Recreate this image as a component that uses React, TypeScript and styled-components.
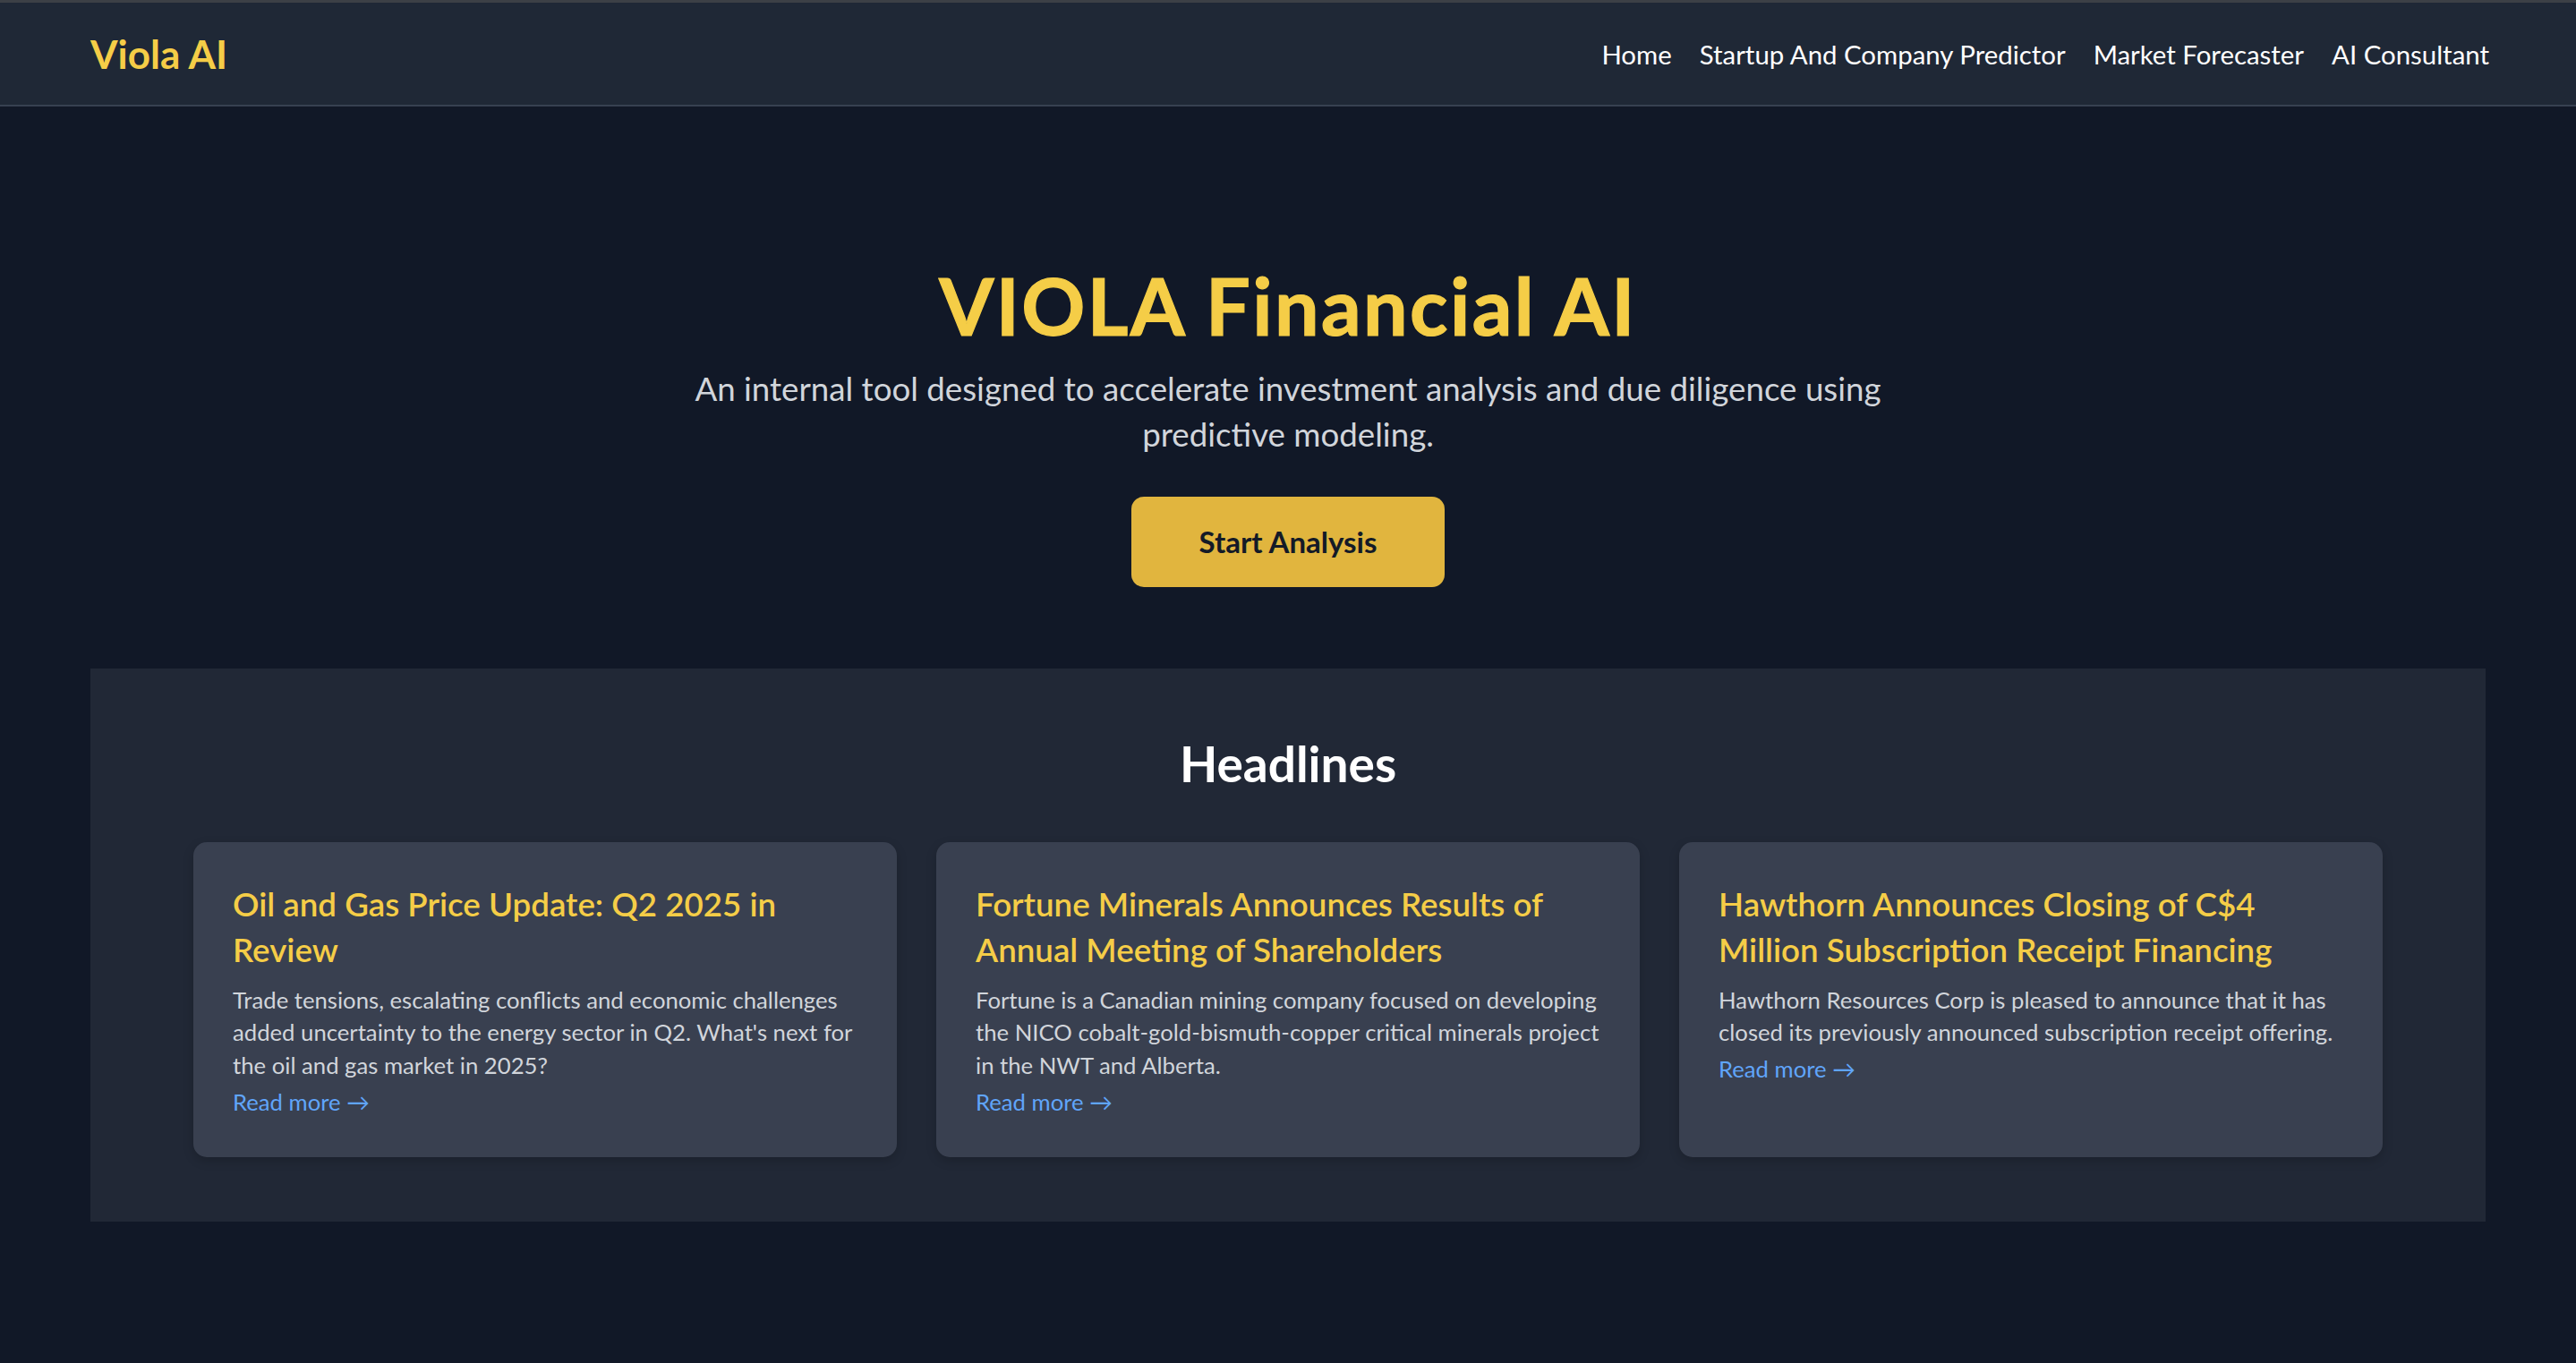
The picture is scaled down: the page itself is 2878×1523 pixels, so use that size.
import React from 'react';
import styled, { createGlobalStyle } from 'styled-components';

const GlobalStyle = createGlobalStyle`
  html, body {
    margin: 0;
    padding: 0;
    background: #111827;
  }
  body {
    font-family: 'Segoe UI', Lato, 'Open Sans', sans-serif;
    -webkit-font-smoothing: antialiased;
  }
  * {
    box-sizing: border-box;
  }
`;

const SPage = styled.div`
  min-height: 100vh;
  background: #111827;
  color: #ffffff;
`;

const SHeader = styled.header`
  height: 119px;
  background: #1f2836;
  border-top: 3px solid #3c4046;
  border-bottom: 2px solid #374151;
  padding: 0 97px 0 101px;
  display: flex;
  align-items: center;
  justify-content: space-between;
`;

const SLogo = styled.a`
  font-size: 44px;
  font-weight: 700;
  color: #f5cd47;
  text-decoration: none;
`;

const SNav = styled.nav`
  display: flex;
  gap: 31px;
`;

const SNavLink = styled.a`
  font-size: 29.4px;
  color: #ffffff;
  text-decoration: none;
`;

const SHero = styled.section`
  padding: 178px 101px 91px;
  display: flex;
  flex-direction: column;
  align-items: center;
  text-align: center;
`;

const STitle = styled.h1`
  margin: 0;
  font-size: 88px;
  line-height: 88px;
  font-weight: 700;
  letter-spacing: 2.4px;
  color: #f5cd47;
  -webkit-text-stroke: 1.2px #f5cd47;
`;

const SSubtitle = styled.p`
  margin: 24px 0 0;
  max-width: 1380px;
  font-size: 36.7px;
  line-height: 51.4px;
  color: #d1d5db;
`;

const SButton = styled.button`
  margin-top: 43px;
  width: 350px;
  height: 101px;
  border: none;
  border-radius: 14px;
  background: #e1b53e;
  color: #141a27;
  font-family: inherit;
  font-size: 33px;
  font-weight: 700;
  cursor: pointer;
`;

const SHeadlines = styled.section`
  margin: 0 101px;
  padding: 73px 115px 72px;
  background: #212836;
`;

const SSectionTitle = styled.h2`
  margin: 0 0 55px;
  text-align: center;
  font-size: 55px;
  line-height: 66px;
  font-weight: 700;
  color: #ffffff;
`;

const SGrid = styled.div`
  display: grid;
  grid-template-columns: repeat(3, 1fr);
  gap: 44px;
`;

const SCard = styled.article`
  background: #394050;
  border-radius: 15px;
  padding: 44px;
  box-shadow: 0 4px 12px rgba(0, 0, 0, 0.18);
`;

const SCardTitle = styled.h3`
  margin: 0;
  font-size: 36.7px;
  line-height: 51.4px;
  font-weight: 600;
  color: #f5cd47;
`;

const SCardText = styled.p`
  margin: 11px 0 0;
  font-size: 25.7px;
  line-height: 36.7px;
  color: #d1d5db;
`;

const SReadMore = styled.a`
  display: block;
  margin-top: 4px;
  font-size: 25.7px;
  line-height: 36.7px;
  color: #60a5fa;
  text-decoration: none;
`;

const headlines = [
  {
    title: 'Oil and Gas Price Update: Q2 2025 in Review',
    text: "Trade tensions, escalating conflicts and economic challenges added uncertainty to the energy sector in Q2. What's next for the oil and gas market in 2025?",
  },
  {
    title: 'Fortune Minerals Announces Results of Annual Meeting of Shareholders',
    text: 'Fortune is a Canadian mining company focused on developing the NICO cobalt-gold-bismuth-copper critical minerals project in the NWT and Alberta.',
  },
  {
    title: 'Hawthorn Announces Closing of C$4 Million Subscription Receipt Financing',
    text: 'Hawthorn Resources Corp is pleased to announce that it has closed its previously announced subscription receipt offering.',
  },
];

const App: React.FC = () => (
  <>
    <GlobalStyle />
    <SPage>
      <SHeader>
        <SLogo href="#">Viola AI</SLogo>
        <SNav>
          <SNavLink href="#">Home</SNavLink>
          <SNavLink href="#">Startup And Company Predictor</SNavLink>
          <SNavLink href="#">Market Forecaster</SNavLink>
          <SNavLink href="#">AI Consultant</SNavLink>
        </SNav>
      </SHeader>

      <SHero>
        <STitle>VIOLA Financial AI</STitle>
        <SSubtitle>
          An internal tool designed to accelerate investment analysis and due diligence using
          predictive modeling.
        </SSubtitle>
        <SButton>Start Analysis</SButton>
      </SHero>

      <SHeadlines>
        <SSectionTitle>Headlines</SSectionTitle>
        <SGrid>
          {headlines.map((h) => (
            <SCard key={h.title}>
              <SCardTitle>{h.title}</SCardTitle>
              <SCardText>{h.text}</SCardText>
              <SReadMore href="#">Read more →</SReadMore>
            </SCard>
          ))}
        </SGrid>
      </SHeadlines>
    </SPage>
  </>
);

export default App;
